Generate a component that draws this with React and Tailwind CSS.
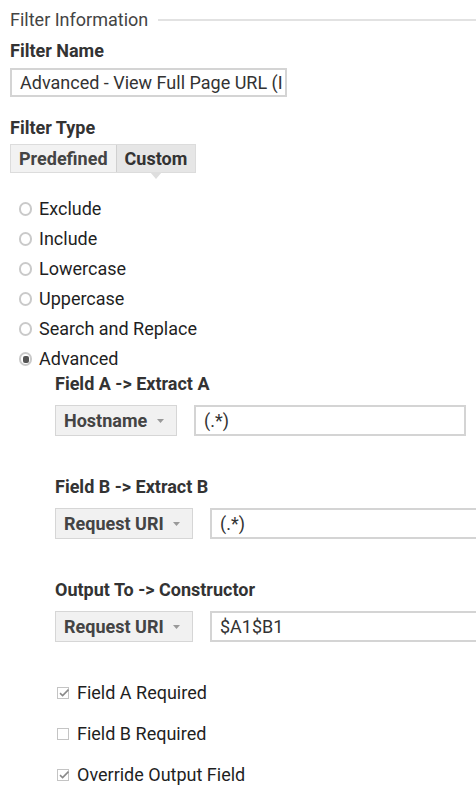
import { useState } from 'react'

const FILTER_TYPES = ['Exclude', 'Include', 'Lowercase', 'Uppercase', 'Search and Replace', 'Advanced']

function Radio({ checked }) {
  return (
    <span className="flex h-[14px] w-[13px] items-center justify-center rounded-full border-2 border-[#cacaca] bg-white">
      {checked && <span className="h-[7px] w-[6px] rounded-[2px] bg-[#555]" />}
    </span>
  )
}

function Checkbox({ checked }) {
  return (
    <span className="relative flex h-[12px] w-[12px] items-center justify-center border border-[#c4c4c4] bg-white">
      {checked && (
        <svg width="12" height="12" viewBox="0 0 12 12" className="absolute left-0 top-[-1px]">
          <path d="M2 6.2 L4.6 8.6 L10.5 2.6" fill="none" stroke="#8a8a8a" strokeWidth="1.6" />
        </svg>
      )}
    </span>
  )
}

function Select({ label, width }) {
  return (
    <div className={`flex h-[31px] shrink-0 items-center justify-between border border-[#d6d6d6] bg-[#f1f1f1] pl-2 pr-3 ${width}`}>
      <span className="font-bold text-[#444]">{label}</span>
      <svg width="7" height="4" viewBox="0 0 7 4">
        <path d="M0 0 L7 0 L3.5 4 Z" fill="#999" />
      </svg>
    </div>
  )
}

function FieldRow({ title, select, selectWidth, value, inputWidth }) {
  return (
    <div>
      <div className="font-bold text-[#333]">{title}</div>
      <div className="mt-[11px] flex items-center gap-[17px]">
        <Select label={select} width={selectWidth} />
        <div className={`flex h-[31px] items-center border-2 border-[#d4d4d4] pl-[8px] text-[#333] ${inputWidth}`}>
          {value}
        </div>
      </div>
    </div>
  )
}

export default function App() {
  const [type] = useState('Advanced')

  return (
    <div className="h-[795px] w-[476px] overflow-hidden bg-white text-[18px] leading-[20px] text-[#1f1f1f]" style={{ fontFamily: 'Roboto, "Liberation Sans", sans-serif' }}>
      <div className="flex items-center pl-[10px] pt-[10px]">
        <span className="text-[#444]">Filter Information</span>
        <div className="ml-[10px] h-[2px] flex-1 bg-[#e2e2e2]" />
      </div>

      <div className="px-[10px]">
        <div className="mt-[11px] font-bold text-[#333]">Filter Name</div>
        <div className="mt-[7px] flex h-[29px] w-[277px] items-center overflow-hidden whitespace-nowrap border-2 border-[#d4d4d4] pl-[8px] text-[#333]">
          Advanced - View Full Page URL (I
        </div>

        <div className="mt-[21px] font-bold text-[#333]">Filter Type</div>
        <div className="mt-[6px] flex h-[29px] w-fit border border-[#dcdcdc]">
          <div className="flex items-center bg-[#f2f2f2] px-[8px] font-bold text-[#444]">Predefined</div>
          <div className="relative flex items-center border-l border-[#d0d0d0] bg-[#e6e6e6] px-[8px] font-bold text-[#333]">
            Custom
            <span className="absolute left-1/2 top-[27px] h-0 w-0 -translate-x-1/2 border-x-[6px] border-t-[7px] border-x-transparent border-t-[#dedede]" />
          </div>
        </div>

        <div className="mt-[26px] flex flex-col gap-[10px] pl-[9px]">
          {FILTER_TYPES.map((t) => (
            <label key={t} className="flex items-center gap-[7px]">
              <Radio checked={t === type} />
              <span>{t}</span>
            </label>
          ))}
        </div>

        <div className="ml-[45px] mt-[5px] flex flex-col gap-[41px]">
          <FieldRow title="Field A -> Extract A" select="Hostname" selectWidth="w-[122px]" value="(.*)" inputWidth="w-[277px]" />
          <FieldRow title="Field B -> Extract B" select="Request URI" selectWidth="w-[138px]" value="(.*)" inputWidth="flex-1 -mr-[20px]" />
          <FieldRow title="Output To -> Constructor" select="Request URI" selectWidth="w-[138px]" value="$A1$B1" inputWidth="flex-1 -mr-[20px]" />
        </div>

        <div className="ml-[47px] mt-[41px] flex flex-col gap-[21px]">
          {[['Field A Required', true], ['Field B Required', false], ['Override Output Field', true]].map(([label, on]) => (
            <label key={label} className="flex items-center gap-[8px]">
              <Checkbox checked={on} />
              <span>{label}</span>
            </label>
          ))}
        </div>
      </div>
    </div>
  )
}
